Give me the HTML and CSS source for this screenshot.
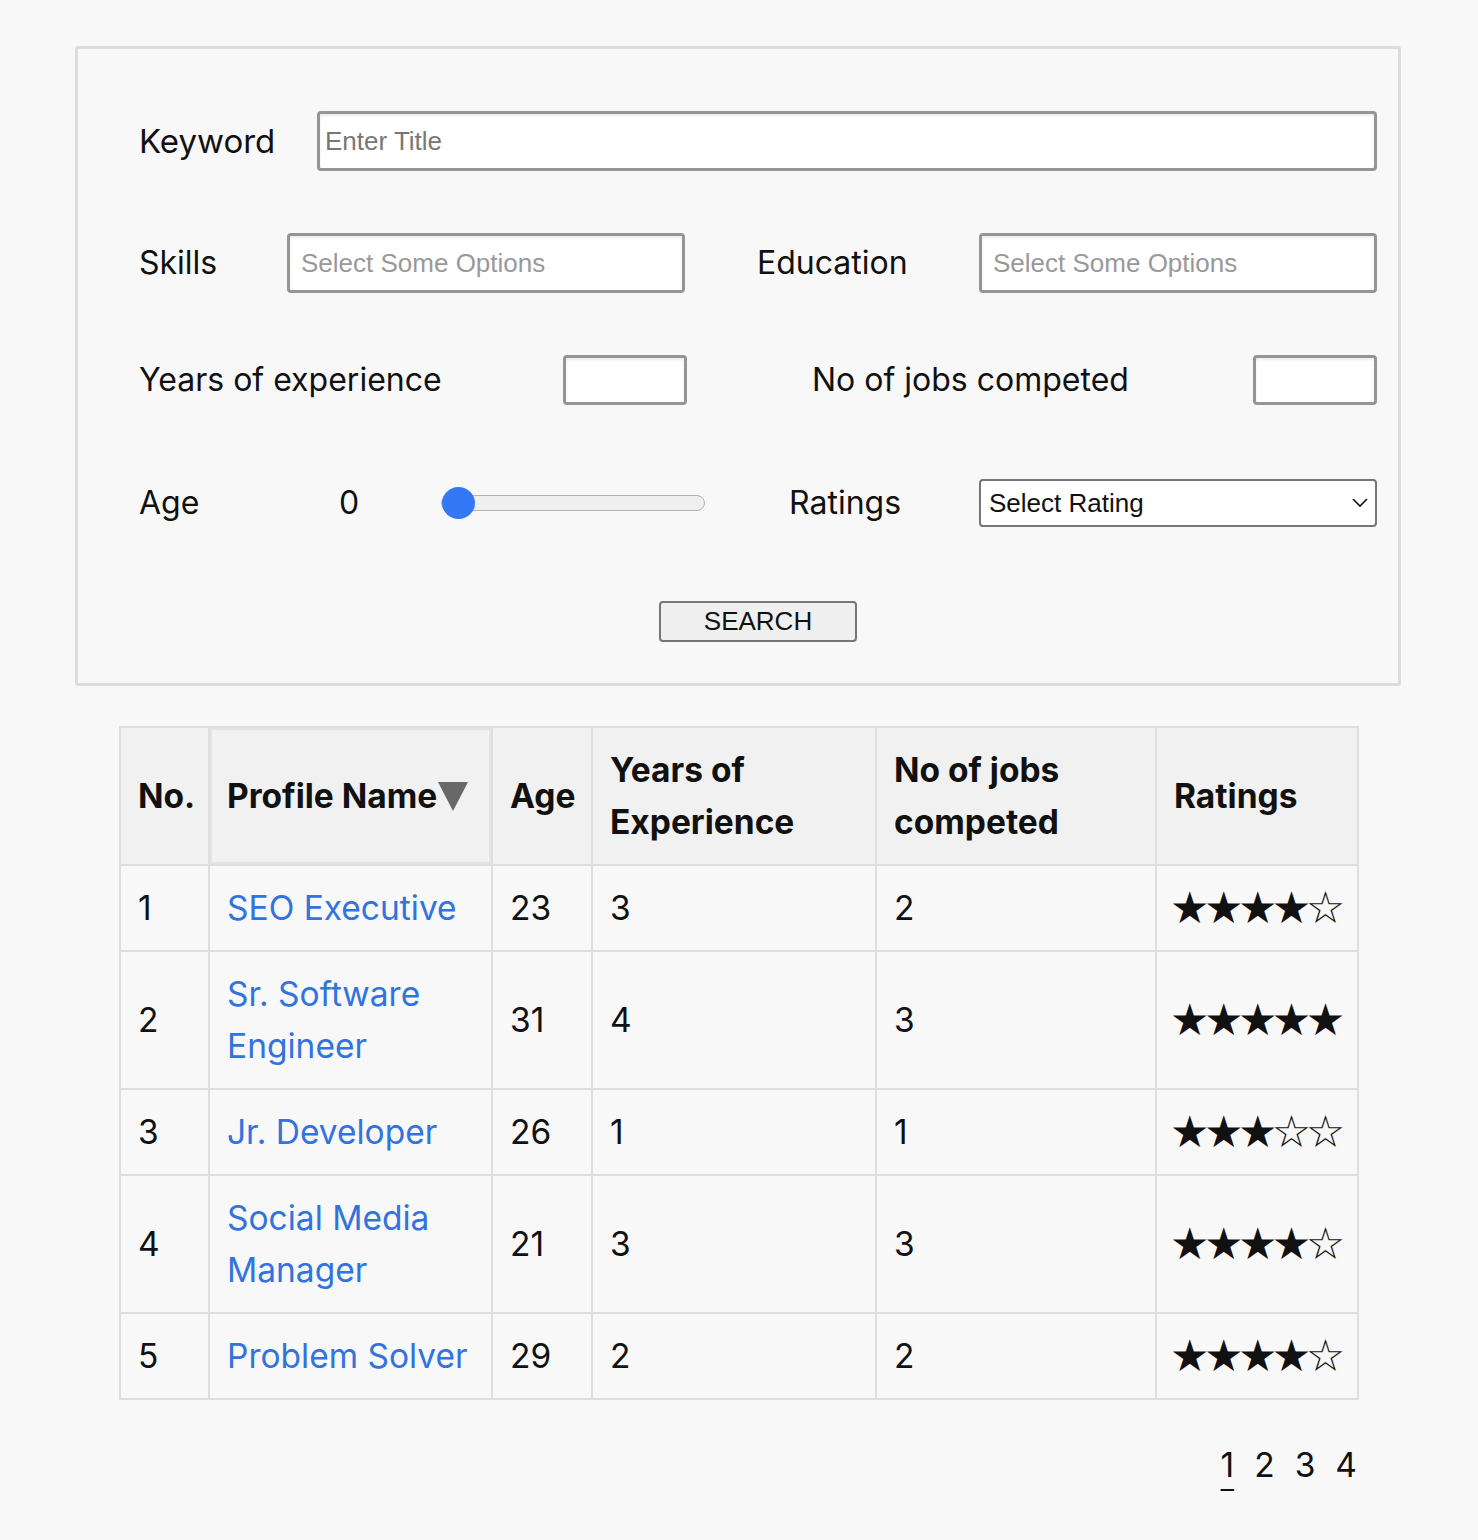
FILE: index.html
```html
<!DOCTYPE html>
<html lang="en">
<head>
<meta charset="utf-8">
<title>Profile Search</title>
<link rel="stylesheet" href="styles.css">
</head>
<body>
<form class="search-box">
  <div class="row row-keyword">
    <label class="lbl lbl-keyword">Keyword</label>
    <input class="field field-keyword" type="text" placeholder="Enter Title">
  </div>
  <div class="row row-pair">
    <label class="lbl lbl-skills">Skills</label>
    <input class="field field-multi" type="text" placeholder="Select Some Options">
    <label class="lbl lbl-education">Education</label>
    <input class="field field-multi" type="text" placeholder="Select Some Options">
  </div>
  <div class="row row-small">
    <label class="lbl lbl-years">Years of experience</label>
    <input class="field field-small" type="text">
    <label class="lbl lbl-jobs">No of jobs competed</label>
    <input class="field field-small" type="text">
  </div>
  <div class="row row-age">
    <label class="lbl lbl-age">Age</label>
    <span class="age-value">0</span>
    <input class="age-range" type="range" min="0" max="100" value="0">
    <label class="lbl lbl-ratings">Ratings</label>
    <div class="select-wrap">
      <select class="rating-select">
        <option>Select Rating</option>
      </select>
      <svg class="chevron" width="16" height="10" viewBox="0 0 16 10"><polyline points="1,1 8,8 15,1" fill="none" stroke="#111" stroke-width="1.6"/></svg>
    </div>
  </div>
  <div class="row row-button">
    <button class="search-btn" type="button">SEARCH</button>
  </div>
</form>

<table class="profiles">
  <colgroup>
    <col class="c-no"><col class="c-name"><col class="c-age"><col class="c-years"><col class="c-jobs"><col class="c-rating">
  </colgroup>
  <thead>
    <tr>
      <th>No.</th>
      <th class="th-sort">Profile Name<svg class="sort-arrow" width="30" height="30" viewBox="0 0 30 30"><polygon points="0,1 30,1 15,30" fill="#686868"/></svg></th>
      <th>Age</th>
      <th>Years of Experience</th>
      <th>No of jobs competed</th>
      <th>Ratings</th>
    </tr>
  </thead>
  <tbody>
    <tr><td>1</td><td><a href="#" class="profile-link">SEO Executive</a></td><td>23</td><td>3</td><td>2</td><td><span class="stars">★★★★☆</span></td></tr>
    <tr><td>2</td><td><a href="#" class="profile-link">Sr. Software Engineer</a></td><td>31</td><td>4</td><td>3</td><td><span class="stars">★★★★★</span></td></tr>
    <tr><td>3</td><td><a href="#" class="profile-link">Jr. Developer</a></td><td>26</td><td>1</td><td>1</td><td><span class="stars">★★★☆☆</span></td></tr>
    <tr><td>4</td><td><a href="#" class="profile-link">Social Media Manager</a></td><td>21</td><td>3</td><td>3</td><td><span class="stars">★★★★☆</span></td></tr>
    <tr><td>5</td><td><a href="#" class="profile-link">Problem Solver</a></td><td>29</td><td>2</td><td>2</td><td><span class="stars">★★★★☆</span></td></tr>
  </tbody>
</table>

<nav class="pager">
  <a href="#" class="page active">1</a>
  <a href="#" class="page">2</a>
  <a href="#" class="page">3</a>
  <a href="#" class="page">4</a>
</nav>
</body>
</html>
```

FILE: styles.css
```css
html, body {
  margin: 0;
  padding: 0;
}

body {
  background: #f8f8f8;
  font-family: Inter, "Liberation Sans", sans-serif;
  color: #111;
  height: 1540px;
}

/* ---------- search form ---------- */
.search-box {
  box-sizing: border-box;
  width: 1326px;
  margin: 46px 0 0 75px;
  border: 3px solid #dcdcdc;
  border-radius: 3px;
  padding: 62px 21px 41px 61px;
  display: flex;
  flex-direction: column;
}

.row {
  display: flex;
  align-items: center;
}

.row-keyword { height: 60px; }
.row-pair { height: 60px; margin-top: 62px; }
.row-small { height: 50px; margin-top: 62px; }
.row-age { height: 48px; margin-top: 74px; }
.row-button { height: 41px; margin-top: 74px; justify-content: center; }

.lbl {
  font-size: 32px;
  line-height: 40px;
  color: #111;
  flex: none;
}

.lbl-keyword { width: 178px; font-size: 33px; }
.lbl-skills { width: 148px; }
.lbl-education { width: 222px; margin-left: 72px; }
.lbl-years { width: 424px; }
.lbl-jobs { width: 441px; margin-left: 125px; }
.lbl-age { width: 200px; }
.lbl-ratings { width: 190px; margin-left: 84px; }

.field {
  box-sizing: border-box;
  border: 3px solid #959595;
  border-radius: 4px;
  background: #fff;
  font-family: "Liberation Sans", Arial, sans-serif;
  font-size: 26px;
  color: #111;
  margin: 0;
  outline: none;
  box-shadow: inset 0 2px 3px rgba(0, 0, 0, 0.08);
  flex: none;
}

.field-keyword {
  flex: 1;
  height: 60px;
  padding: 0 5px;
}
.field-keyword::placeholder { color: #777; }

.field-multi {
  width: 398px;
  height: 60px;
  padding: 0 11px;
}
.field-multi::placeholder { color: #999; }

.field-small {
  width: 124px;
  height: 50px;
  padding: 0 6px;
}

.age-value {
  width: 102px;
  font-size: 32px;
  line-height: 40px;
  flex: none;
}

.age-range {
  -webkit-appearance: none;
  appearance: none;
  width: 264px;
  height: 34px;
  margin: 0;
  padding: 0;
  background: transparent;
  flex: none;
}
.age-range::-webkit-slider-runnable-track {
  height: 16px;
  box-sizing: border-box;
  border: 1.5px solid #b3b3b3;
  border-radius: 8px;
  background: #efefef;
}
.age-range::-webkit-slider-thumb {
  -webkit-appearance: none;
  appearance: none;
  width: 33px;
  height: 32px;
  border-radius: 50%;
  background: #3478f6;
  border: none;
  margin-top: -9.5px;
}

.select-wrap {
  position: relative;
  width: 398px;
  height: 48px;
  flex: none;
}
.rating-select {
  -webkit-appearance: none;
  appearance: none;
  box-sizing: border-box;
  width: 100%;
  height: 100%;
  border: 2px solid #767676;
  border-radius: 4px;
  background: #fff;
  font-family: "Liberation Sans", Arial, sans-serif;
  font-size: 26px;
  color: #111;
  padding: 0 8px;
  margin: 0;
}
.chevron {
  position: absolute;
  right: 9px;
  top: 19px;
  pointer-events: none;
}

.search-btn {
  box-sizing: border-box;
  width: 198px;
  height: 41px;
  border: 2px solid #767676;
  border-radius: 4px;
  background: #efefef;
  font-family: "Liberation Sans", Arial, sans-serif;
  font-size: 26px;
  color: #111;
  padding: 0;
}

/* ---------- table ---------- */
.profiles {
  width: 1238px;
  margin: 40px 0 0 119px;
  border-collapse: collapse;
  table-layout: fixed;
  border: 2px solid #dedede;
  font-size: 33.5px;
  line-height: 52px;
}

.c-no { width: 89px; }
.c-name { width: 283px; }
.c-age { width: 100px; }
.c-years { width: 284px; }
.c-jobs { width: 280px; }
.c-rating { width: 202px; }

.profiles th,
.profiles td {
  border: 2px solid #dedede;
  padding: 16px 17px;
  text-align: left;
  vertical-align: middle;
}

.profiles th {
  background: #f1f1f1;
  font-weight: 700;
}

.th-sort {
  box-shadow: inset 0 0 0 2px #e4e4e4;
  white-space: nowrap;
  padding-left: 18px;
}

.sort-arrow {
  display: inline-block;
  vertical-align: -3px;
  margin-left: 1px;
}

.profile-link {
  color: #3273dd;
  text-decoration: none;
}

.stars {
  display: inline-block;
  vertical-align: top;
  height: 52px;
  line-height: 52px;
  font-family: "DejaVu Sans", sans-serif;
  font-size: 44px;
  letter-spacing: -5.5px;
  margin-left: -4px;
  color: #111;
  white-space: nowrap;
}

/* ---------- pager ---------- */
.pager {
  width: 1238px;
  margin: 39px 0 0 119px;
  display: flex;
  justify-content: flex-end;
  gap: 20px;
  font-size: 33.5px;
  line-height: 52px;
}

.page {
  color: #111;
  text-decoration: none;
}

.page.active {
  text-decoration: underline;
  text-decoration-thickness: 2px;
  text-underline-offset: 12px;
}
```
